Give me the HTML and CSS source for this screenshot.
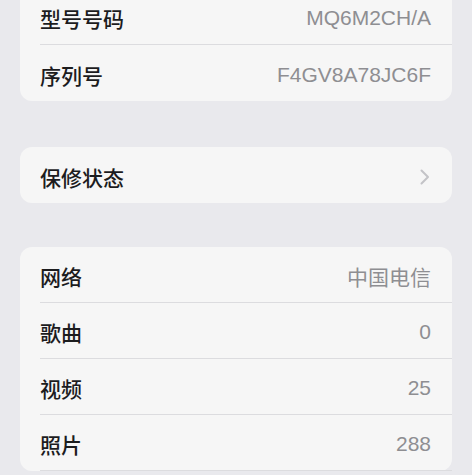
FILE: index.html
```html
<!DOCTYPE html>
<html lang="zh-CN">
<head>
<meta charset="utf-8">
<link rel="stylesheet" href="styles.css">
</head>
<body>
<div class="page">
  <div class="card first">
    <div class="row"><span class="label">型号号码</span><span class="value">MQ6M2CH/A</span></div>
    <div class="row"><span class="label">序列号</span><span class="value">F4GV8A78JC6F</span></div>
  </div>
  <div class="card">
    <div class="row"><span class="label">保修状态</span>
      <svg class="chev" width="12" height="18" viewBox="0 0 12 18"><path d="M2.5 2.5 L9 9 L2.5 15.5" fill="none" stroke="#c3c3c7" stroke-width="2" stroke-linecap="round" stroke-linejoin="round"/></svg>
    </div>
  </div>
  <div class="card last">
    <div class="row"><span class="label">网络</span><span class="value">中国电信</span></div>
    <div class="row"><span class="label">歌曲</span><span class="value">0</span></div>
    <div class="row"><span class="label">视频</span><span class="value">25</span></div>
    <div class="row"><span class="label">照片</span><span class="value">288</span></div>
  </div>
</div>
</body>
</html>
```
FILE: styles.css
```css
html, body {
  margin: 0;
  padding: 0;
  background: #e9e9ed;
  overflow: hidden;
}
body {
  width: 472px;
  height: 475px;
  font-family: "Liberation Sans", "Noto Sans CJK SC", sans-serif;
}
.page {
  display: flex;
  flex-direction: column;
  gap: 46px;
  padding: 0 20px;
  margin-top: -12px;
}
.card {
  background: #f6f6f6;
  border-radius: 12px;
  padding-left: 20px;
  display: flex;
  flex-direction: column;
}
.card.last {
  margin-top: -2px;
}
.row {
  height: 56px;
  display: flex;
  align-items: center;
  justify-content: space-between;
  padding-right: 21px;
  border-bottom: 1px solid #dcdcdf;
}
.card.last .row {
  height: 55px;
}
.card .row:last-child {
  border-bottom: none;
}
.card.last .row:last-child {
  border-bottom: 1px solid #dcdcdf;
}
.label {
  font-family: "Noto Sans CJK SC", sans-serif;
  font-size: 21px;
  font-weight: 500;
  color: #1c1c1e;
  padding-top: 3px;
}
.value {
  font-family: "Liberation Sans", "Noto Sans CJK SC", sans-serif;
  font-size: 21px;
  color: #8e8e92;
  padding-top: 3px;
}
.chev {
  display: block;
  margin-top: 3px;
}
```
